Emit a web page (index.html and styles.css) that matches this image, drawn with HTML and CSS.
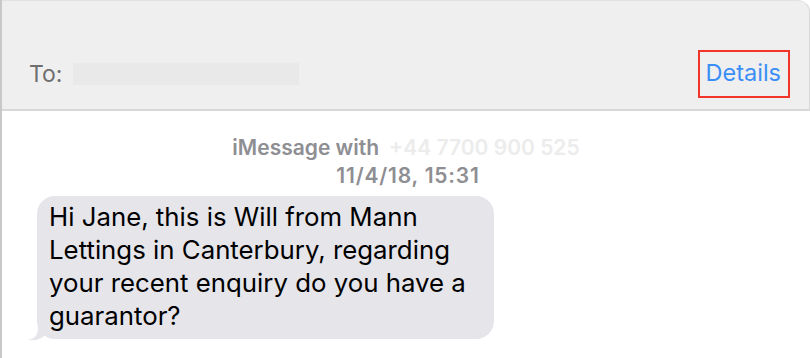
FILE: index.html
```html
<!DOCTYPE html>
<html>
<head>
<meta charset="utf-8">
<link rel="stylesheet" href="styles.css">
</head>
<body>
<div class="window">
  <header class="header">
    <div class="to">
      <span class="to-label">To:</span>
      <span class="redacted"></span>
    </div>
    <div class="details-box"><span class="details">Details</span></div>
  </header>
  <main class="thread">
    <div class="meta">
      <div class="meta-line"><span>iMessage with</span><span class="faint">+44 7700 900 525</span></div>
      <div class="meta-time">11/4/18, 15:31</div>
    </div>
    <div class="bubble">
      Hi Jane, this is Will from Mann<br>Lettings in Canterbury, regarding<br>your recent enquiry do you have a<br>guarantor?
      <svg class="tail" width="20" height="22" viewBox="0 0 20 22"><path d="M10 0 L10 10 C10 16 6 20 0 21 C7 22 13 20 16 17 L20 17 L20 0 Z" fill="#e5e5ea"/></svg>
    </div>
  </main>
</div>
</body>
</html>
```

FILE: styles.css
```css
html, body {
  margin: 0;
  padding: 0;
  background: #ffffff;
}
body {
  width: 810px;
  height: 358px;
  overflow: hidden;
  font-family: Inter, "Liberation Sans", sans-serif;
}
.window {
  height: 358px;
  border-left: 2px solid #c8c8c8;
  box-sizing: border-box;
}
.header {
  height: 111px;
  box-sizing: border-box;
  background: #efefef;
  border-bottom: 2px solid #d8d8d8;
  border-top: 1px solid #e2e2e2;
  border-right: 1px solid #d8d8d8;
  border-top-right-radius: 12px;
  display: flex;
  align-items: center;
  justify-content: space-between;
  padding: 38px 19px 0 27px;
}
.to {
  display: flex;
  align-items: center;
  gap: 11px;
}
.to-label {
  font-size: 23px;
  line-height: 28px;
  color: #6f6f6f;
}
.redacted {
  display: block;
  width: 226px;
  height: 22px;
  background: #e9e9e9;
}
.details-box {
  border: 2px solid #f2342b;
  padding: 7px 7px 9px 6px;
}
.details {
  display: block;
  font-size: 23.5px;
  line-height: 28px;
  color: #3b8ef5;
}
.thread {
  padding: 23px 0 0 0;
}
.meta {
  display: flex;
  flex-direction: column;
  align-items: center;
  color: #8e8e93;
  font-size: 21px;
  font-weight: 600;
  line-height: 28px;
}
.meta-line {
  display: flex;
  gap: 10px;
}
.faint {
  color: #ececec;
}
.meta-time {
  margin-left: 4px;
  letter-spacing: 0.8px;
}
.bubble {
  position: relative;
  margin: 6px 0 0 35px;
  width: 457px;
  box-sizing: border-box;
  background: #e5e5ea;
  border-radius: 18px;
  padding: 4px 8px 7px 12px;
  font-size: 25.8px;
  line-height: 33px;
  color: #000000;
}
.tail {
  position: absolute;
  left: -9px;
  bottom: -2px;
}
```
